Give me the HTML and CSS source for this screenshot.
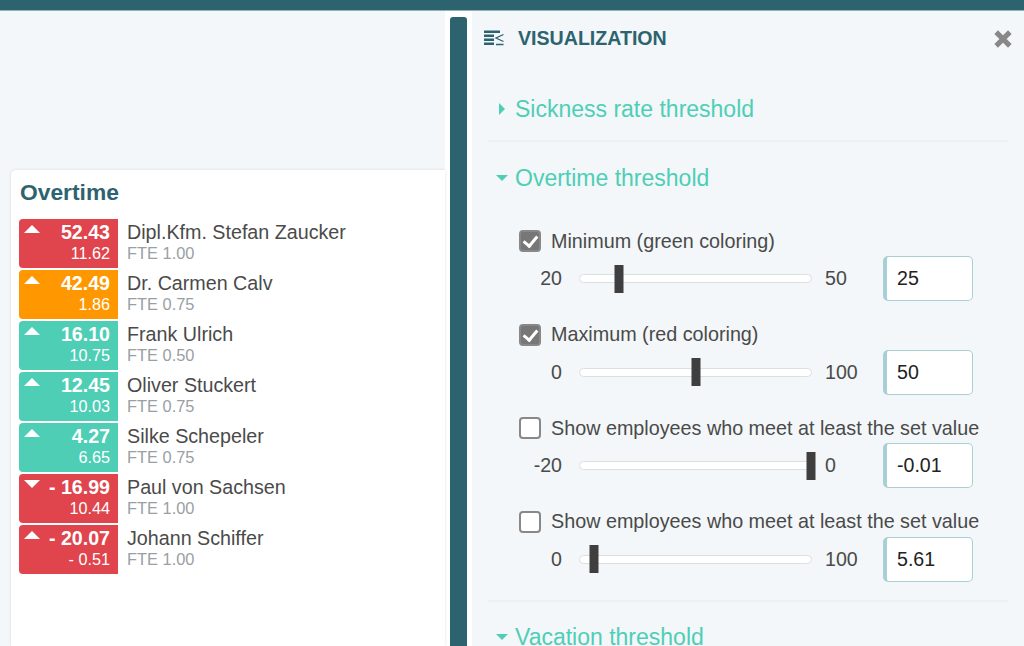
FILE: index.html
```html
<!DOCTYPE html>
<html lang="en">
<head>
    <meta charset="UTF-8">
    <title>Overtime</title>
    <link rel="stylesheet" href="styles.css">
</head>
<body>
<div class="top-bar"></div>
<div class="main">
    <div class="left">
        <div class="card">
            <h2>Overtime</h2>
            <div class="emp">
                <div class="badge red"><span class="tri up"></span><b>52.43</b><span>11.62</span></div>
                <div class="emp-text"><div class="name">Dipl.Kfm. Stefan Zaucker</div><div class="fte">FTE 1.00</div></div>
            </div>
            <div class="emp">
                <div class="badge orange"><span class="tri up"></span><b>42.49</b><span>1.86</span></div>
                <div class="emp-text"><div class="name">Dr. Carmen Calv</div><div class="fte">FTE 0.75</div></div>
            </div>
            <div class="emp">
                <div class="badge green"><span class="tri up"></span><b>16.10</b><span>10.75</span></div>
                <div class="emp-text"><div class="name">Frank Ulrich</div><div class="fte">FTE 0.50</div></div>
            </div>
            <div class="emp">
                <div class="badge green"><span class="tri up"></span><b>12.45</b><span>10.03</span></div>
                <div class="emp-text"><div class="name">Oliver Stuckert</div><div class="fte">FTE 0.75</div></div>
            </div>
            <div class="emp">
                <div class="badge green"><span class="tri up"></span><b>4.27</b><span>6.65</span></div>
                <div class="emp-text"><div class="name">Silke Schepeler</div><div class="fte">FTE 0.75</div></div>
            </div>
            <div class="emp">
                <div class="badge red"><span class="tri down"></span><b>- 16.99</b><span>10.44</span></div>
                <div class="emp-text"><div class="name">Paul von Sachsen</div><div class="fte">FTE 1.00</div></div>
            </div>
            <div class="emp">
                <div class="badge red"><span class="tri up"></span><b>- 20.07</b><span>- 0.51</span></div>
                <div class="emp-text"><div class="name">Johann Schiffer</div><div class="fte">FTE 1.00</div></div>
            </div>
        </div>
    </div>
    <div class="gutter"><div class="handle"></div></div>
    <div class="panel">
        <div class="panel-head">
            <svg class="viz-icon" width="20" height="16" viewBox="0 0 20 16">
                <path d="M0 .6h16V3H0zM0 4.6h10V7H0zM0 8.6h10V11H0zM0 12.6h10V15H0z" fill="#2d636e"/>
                <path d="M19.5 4.5L12 8l7.500 3.500M12 14.500h7.500" fill="none" stroke="#2d636e" stroke-width="1.300"/>
            </svg>
            <span class="panel-title">VISUALIZATION</span>
            <svg class="close" width="20" height="18" viewBox="0 0 19 17">
                <path d="M3 2l13 13M16 2L3 15" fill="none" stroke="#888" stroke-width="4.800"/>
            </svg>
        </div>

        <div class="section">
            <div class="sec-title"><span class="caret right"></span>Sickness rate threshold</div>
        </div>

        <div class="section">
            <div class="sec-title"><span class="caret open"></span>Overtime threshold</div>
            <div class="setting">
                <label class="check"><input type="checkbox" checked>Minimum (green coloring)</label>
                <div class="slider-row">
                    <span class="lo">20</span>
                    <div class="track"><span class="thumb" style="left: 16.8%"></span></div>
                    <span class="hi">50</span>
                    <input class="num" type="text" value="25">
                </div>
            </div>
            <div class="setting">
                <label class="check"><input type="checkbox" checked>Maximum (red coloring)</label>
                <div class="slider-row">
                    <span class="lo">0</span>
                    <div class="track"><span class="thumb" style="left: 50.2%"></span></div>
                    <span class="hi">100</span>
                    <input class="num" type="text" value="50">
                </div>
            </div>
            <div class="setting">
                <label class="check"><input type="checkbox">Show employees who meet at least the set value</label>
                <div class="slider-row">
                    <span class="lo">-20</span>
                    <div class="track"><span class="thumb" style="left: 100%"></span></div>
                    <span class="hi">0</span>
                    <input class="num" type="text" value="-0.01">
                </div>
            </div>
            <div class="setting">
                <label class="check"><input type="checkbox">Show employees who meet at least the set value</label>
                <div class="slider-row">
                    <span class="lo">0</span>
                    <div class="track"><span class="thumb" style="left: 6.2%"></span></div>
                    <span class="hi">100</span>
                    <input class="num" type="text" value="5.61">
                </div>
            </div>
        </div>

        <div class="section">
            <div class="sec-title"><span class="caret open"></span>Vacation threshold</div>
        </div>
    </div>
</div>
</body>
</html>
```
FILE: styles.css
```css
:root {
    --teal: #2d636e;
    --mint: #4fceb6;
    --bg: #f3f7f9;
    --text: #4a4a4a;
}

html, body {
    height: 100%;
}

body {
    margin: 0;
    display: flex;
    flex-direction: column;
    overflow: hidden;
    font-family: "Liberation Sans", Arial, sans-serif;
    color: var(--text);
    background-color: #fff;
}

.top-bar {
    flex: none;
    height: 10px;
    background-color: var(--teal);
    border-bottom: 1px solid #8fb3b8;
}

.main {
    flex: 1;
    display: flex;
    min-height: 0;
}

/* left list */
.left {
    flex: none;
    box-sizing: border-box;
    width: 445px;
    padding: 159px 0 0 11px;
    background-color: var(--bg);
}

.card {
    height: 100%;
    box-sizing: border-box;
    padding: 9px 0 0 8px;
    background-color: #fff;
    border-radius: 5px 0 0 0;
    box-shadow: 0 0 3px rgba(0, 0, 0, 0.12);
}

h2 {
    margin: 0 0 13px 1px;
    font-size: 22.8px;
    line-height: 27px;
    color: var(--teal);
}

.emp {
    display: flex;
    margin-bottom: 2px;
    height: 49px;
}

.badge {
    position: relative;
    flex: none;
    box-sizing: border-box;
    width: 99px;
    padding: 3px 8px 0 0;
    display: flex;
    flex-direction: column;
    align-items: flex-end;
    border-radius: 4px 0 0 4px;
    color: #fff;
    font-size: 16.2px;
    line-height: 21px;
}

.badge b {
    font-size: 19.6px;
    line-height: 21px;
}

.red { background-color: #e0444c; }
.orange { background-color: #ff9800; }
.green { background-color: var(--mint); }

.tri {
    position: absolute;
    left: 5px;
    top: 6px;
    border-left: 8.5px solid transparent;
    border-right: 8.5px solid transparent;
}

.tri.up { border-bottom: 8px solid #fff; }
.tri.down { border-top: 8px solid #fff; }

.emp-text {
    padding: 3px 0 0 9px;
}

.name {
    font-size: 19.7px;
    line-height: 21px;
}

.fte {
    font-size: 16.4px;
    line-height: 20px;
    color: #999fa3;
}

/* handle between list and panel */
.gutter {
    flex: none;
    width: 27px;
    padding: 6px 0 0 5px;
    box-sizing: border-box;
}

.handle {
    width: 17px;
    height: 100%;
    background-color: var(--teal);
    border-radius: 3px 3px 0 0;
}

/* settings panel */
.panel {
    flex: 1;
    box-sizing: border-box;
    padding: 0 16px 0 16px;
    background-color: var(--bg);
    overflow: hidden;
}

.panel-head {
    display: flex;
    align-items: center;
    height: 55px;
    margin-bottom: 7px;
}

.viz-icon {
    margin: 0 14px 0 -4px;
    position: relative;
    top: -1px;
}

.panel-title {
    font-size: 19.6px;
    font-weight: bold;
    color: var(--teal);
}

.close {
    margin-left: auto;
    margin-right: -5px;
}

.section {
    padding: 20px 0 15px;
    border-bottom: 2px solid #eef1f3;
}

.section:nth-child(3) {
    padding-bottom: 0;
}

.section:last-child {
    padding-top: 19px;
    border-bottom: none;
}

.sec-title {
    display: flex;
    align-items: center;
    font-size: 23px;
    line-height: 32px;
    color: var(--mint);
}

.caret {
    flex: none;
    width: 27px;
    display: flex;
    justify-content: center;
}

.caret::before {
    content: "";
    border-style: solid;
    border-color: transparent;
}

.caret.right::before {
    border-width: 6.5px 0 6.5px 6.5px;
    border-left-color: var(--mint);
}

.caret.open::before {
    border-width: 6.5px 6.5px 0 6.5px;
    border-top-color: var(--mint);
}

.setting {
    padding-left: 32px;
    margin-bottom: 20.67px;
}

.setting:last-child {
    margin-bottom: 18px;
}

.sec-title + .setting {
    margin-top: 34px;
}

.check {
    display: flex;
    align-items: center;
    height: 26px;
    font-size: 19.75px;
}

.check input {
    appearance: none;
    position: relative;
    flex: none;
    box-sizing: border-box;
    width: 22px;
    height: 22px;
    margin: 0 10px 0 -1px;
    background-color: #fff;
    border: 2px solid #888;
    border-radius: 4px;
}

.check input:checked {
    background-color: #777;
}

.check input:checked::after {
    content: "";
    position: absolute;
    left: 5px;
    top: 1px;
    width: 6px;
    height: 11px;
    border: solid #fff;
    border-width: 0 3px 3px 0;
    transform: rotate(40deg);
}

.slider-row {
    display: flex;
    align-items: center;
    height: 45px;
    margin-top: 2px;
    font-size: 19.6px;
}

.lo {
    flex: none;
    width: 43px;
    margin-left: -1px;
    text-align: right;
}

.track {
    position: relative;
    flex: none;
    box-sizing: border-box;
    width: 233px;
    height: 9px;
    margin-left: 17px;
    background-color: #fff;
    border: 1px solid #dcdfe0;
    border-radius: 5px;
}

.thumb {
    position: absolute;
    top: 50%;
    width: 9px;
    height: 28px;
    transform: translate(-50%, -50%);
    background-color: #3f3f3f;
}

.hi {
    flex: none;
    width: 58px;
    margin-left: 13px;
}

.num {
    flex: none;
    box-sizing: border-box;
    width: 90px;
    height: 45px;
    padding: 0 0 0 10px;
    background-color: #fff;
    border: 1px solid #a8cfd3;
    border-left-width: 4px;
    border-radius: 5px;
    font-family: inherit;
    font-size: 19.6px;
    color: #222;
}
```
